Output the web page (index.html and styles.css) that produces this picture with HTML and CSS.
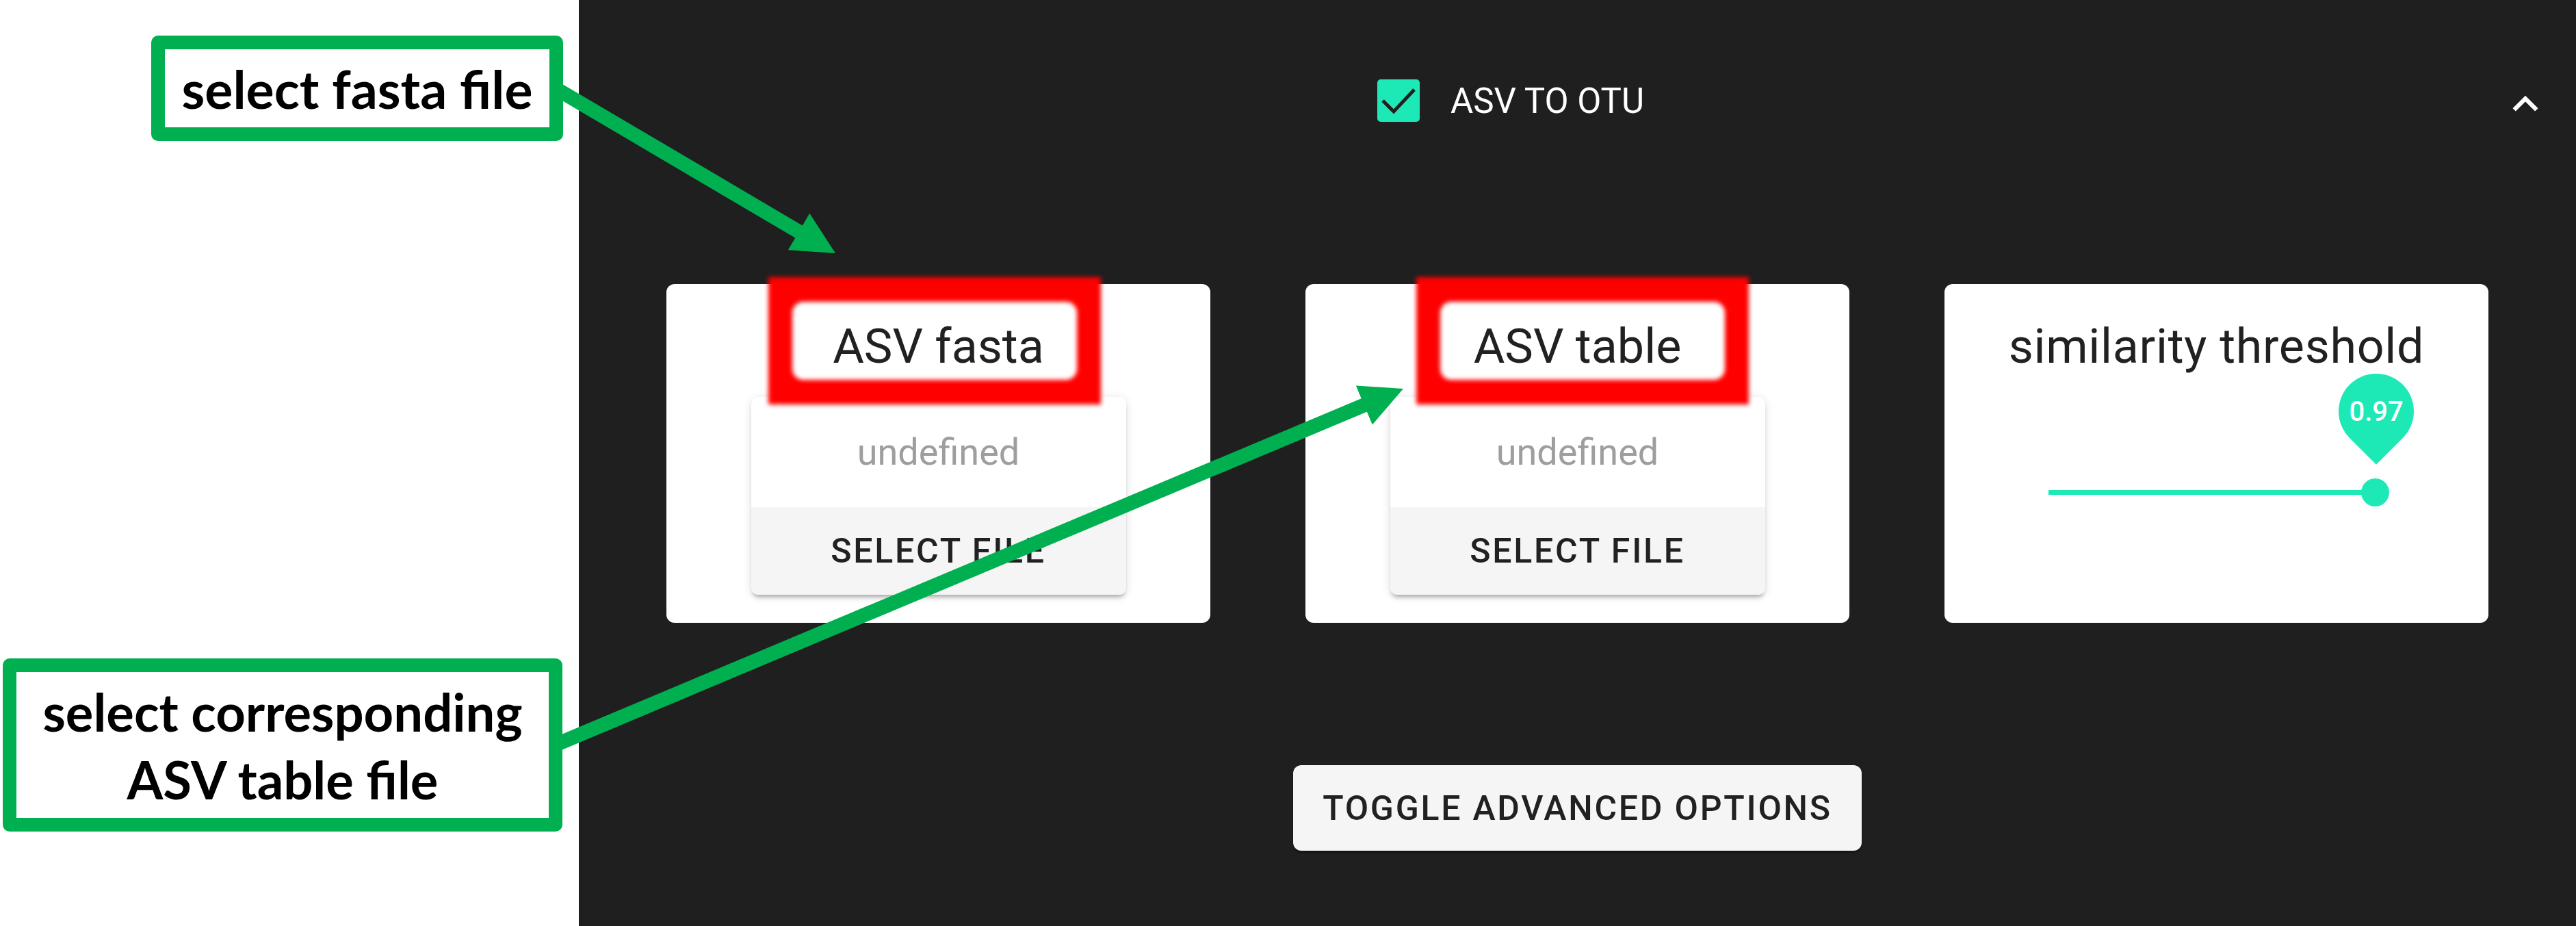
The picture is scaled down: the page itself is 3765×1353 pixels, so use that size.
FILE: index.html
```html
<!DOCTYPE html>
<html lang="en">
<head>
    <meta charset="UTF-8">
    <title>ASV to OTU</title>
    <link rel="stylesheet" href="styles.css">
</head>
<body>
    <div class="page">
        <aside class="notes">
            <div class="note note-top">select fasta file</div>
            <div class="note note-bottom">select corresponding<br>ASV table file</div>
        </aside>

        <main class="panel">
            <div class="summary">
                <label class="toggle">
                    <svg class="checkbox" viewBox="0 0 62 62">
                        <rect width="62" height="62" rx="5" fill="#1de9b6"/>
                        <polyline points="8,31 24,47 54,15" fill="none" stroke="#1f1f1f" stroke-width="5"/>
                    </svg>
                    <span>ASV TO OTU</span>
                </label>
                <svg class="chevron" viewBox="0 0 24 24">
                    <path d="M12 8l-6 6 1.41 1.41L12 10.83l4.59 4.58L18 14z" fill="#fff"/>
                </svg>
            </div>

            <div class="cards">
                <section class="card">
                    <div class="mark mark-fasta"><div></div></div>
                    <h2 class="card-title">ASV fasta</h2>
                    <div class="file-box">
                        <div class="file-name">undefined</div>
                        <button class="file-btn">SELECT FILE</button>
                    </div>
                </section>

                <section class="card">
                    <div class="mark mark-table"><div></div></div>
                    <h2 class="card-title">ASV table</h2>
                    <div class="file-box">
                        <div class="file-name">undefined</div>
                        <button class="file-btn">SELECT FILE</button>
                    </div>
                </section>

                <section class="card">
                    <h2 class="card-title wide">similarity threshold</h2>
                    <div class="slider">
                        <div class="slider-track"></div>
                        <div class="slider-thumb">
                            <div class="slider-label"><span>0.97</span></div>
                        </div>
                    </div>
                </section>
            </div>

            <div class="actions">
                <button class="btn">TOGGLE ADVANCED OPTIONS</button>
            </div>
        </main>
    </div>

    <!-- annotation arrows -->
    <svg class="arrows" viewBox="0 0 3765 1353">
        <line x1="813" y1="129.7" x2="1170" y2="340" stroke="#00b050" stroke-width="21"/>
        <polygon points="1221,370 1151.9,365.2 1183.3,311.8" fill="#00b050"/>
        <line x1="813" y1="1087.7" x2="1996" y2="591" stroke="#00b050" stroke-width="21"/>
        <polygon points="2051,568 2005.8,620.6 1981.8,563.4" fill="#00b050"/>
    </svg>
</body>
</html>
```

FILE: styles.css
```css
html, body {
    margin: 0;
}
body {
    width: 3765px;
    height: 1353px;
    overflow: hidden;
    position: relative;
    font-family: Roboto, "Liberation Sans", sans-serif;
    background: #fff;
}
.page {
    display: flex;
    height: 100%;
}

/* left annotations */
.notes {
    width: 846px;
    flex: none;
    box-sizing: border-box;
    padding: 52px 23px 138px 4px;
    display: flex;
    flex-direction: column;
    justify-content: space-between;
    background: #fff;
}
.note {
    box-sizing: border-box;
    border: 20px solid #00b050;
    border-radius: 10px;
    display: flex;
    align-items: center;
    justify-content: center;
    text-align: center;
    font-family: Lato, "Open Sans", sans-serif;
    font-weight: 700;
    color: #000;
}
.note-top {
    align-self: flex-end;
    width: 602px;
    height: 154px;
    font-size: 77px;
}
.note-bottom {
    width: 818px;
    height: 253px;
    font-size: 76px;
    line-height: 99px;
}

/* dark panel */
.panel {
    flex: 1;
    background: #1f1f1f;
    display: flex;
    flex-direction: column;
}
.summary {
    height: 294px;
    display: flex;
    align-items: center;
    padding: 0 37px 0 1167px;
}
.toggle {
    display: flex;
    align-items: center;
    gap: 45px;
    color: #fff;
    font-size: 51px;
}
.checkbox {
    width: 62px;
    height: 62px;
}
.chevron {
    width: 74px;
    height: 74px;
    margin-left: auto;
    margin-top: 10px;
}

.cards {
    display: flex;
    justify-content: center;
    gap: 139px;
    margin-top: 121px;
}
.card {
    position: relative;
    width: 795px;
    height: 495px;
    box-sizing: border-box;
    padding-top: 49px;
    background: #fff;
    border-radius: 12px;
    display: flex;
    flex-direction: column;
    align-items: center;
}
.card-title {
    position: relative;
    z-index: 3;
    margin: 0;
    font-size: 70px;
    font-weight: 400;
    line-height: 84px;
    color: #212121;
}
.card-title.wide {
    letter-spacing: 0.01em;
}

/* red highlight frame */
.mark {
    position: absolute;
    z-index: 2;
    top: -10px;
    width: 486px;
    height: 186px;
    box-sizing: border-box;
    padding: 36px 35px;
    background: #ff0000;
    filter: blur(3px);
}
.mark div {
    height: 100%;
    background: #fff;
    border-radius: 16px;
}
.mark-fasta {
    left: 149px;
}
.mark-table {
    left: 162px;
}

.file-box {
    margin-top: 32px;
    width: 548px;
    height: 289px;
    border-radius: 10px;
    overflow: hidden;
    display: flex;
    flex-direction: column;
    background: #fff;
    box-shadow: 0 6px 6px -3px rgba(0,0,0,0.3), 0 2px 14px rgba(0,0,0,0.12);
}
.file-name {
    height: 161px;
    display: flex;
    align-items: center;
    justify-content: center;
    font-size: 54px;
    color: #9e9e9e;
}
.file-btn {
    flex: 1;
    border: 0;
    padding: 0;
    background: #f5f5f5;
    font-family: Roboto, sans-serif;
    font-size: 50px;
    font-weight: 500;
    letter-spacing: 0.055em;
    color: #212121;
}

/* slider */
.slider {
    position: relative;
    align-self: flex-start;
    margin: 151px 0 0 152px;
    width: 478px;
    height: 41px;
}
.slider-track {
    position: absolute;
    left: 0;
    right: 0;
    top: 17px;
    height: 7px;
    background: #1de9b6;
}
.slider-thumb {
    position: absolute;
    right: -20px;
    top: 0;
    width: 41px;
    height: 41px;
    border-radius: 50%;
    background: #1de9b6;
}
.slider-label {
    position: absolute;
    left: -33px;
    top: -153px;
    width: 110px;
    height: 110px;
    border-radius: 50% 50% 50% 0;
    background: #1de9b6;
    transform: rotate(-45deg);
    display: flex;
    align-items: center;
    justify-content: center;
}
.slider-label span {
    transform: rotate(45deg);
    color: #fff;
    font-size: 40px;
    font-weight: 500;
}

.actions {
    display: flex;
    justify-content: center;
    margin-top: 208px;
}
.btn {
    width: 831px;
    height: 125px;
    border: 0;
    border-radius: 12px;
    background: #f5f5f5;
    box-shadow: 0 3px 3px rgba(0,0,0,0.35);
    font-family: Roboto, sans-serif;
    font-size: 50px;
    font-weight: 500;
    letter-spacing: 0.055em;
    color: #212121;
}

.arrows {
    position: absolute;
    top: 0;
    left: 0;
    width: 3765px;
    height: 1353px;
    pointer-events: none;
}
```
